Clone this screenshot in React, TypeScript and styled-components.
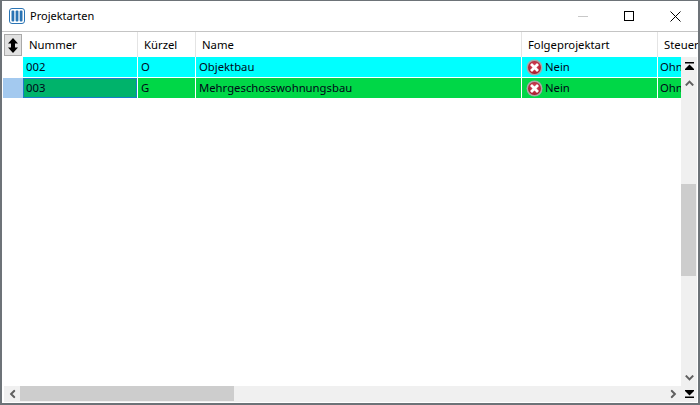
import React from "react";
import styled, { createGlobalStyle } from "styled-components";

const Global = createGlobalStyle`
  html, body { margin: 0; padding: 0; background: #fff; }
  body { font-family: "Noto Sans", "Open Sans", sans-serif; font-size: 11.3px; color: #000; }
`;

const Window = styled.div`
  width: 700px; height: 405px; box-sizing: border-box; overflow: hidden;
  display: flex; flex-direction: column; background: #fff;
  border-style: solid; border-color: #6d7378; border-width: 1px 2px 2px 2px;
`;
const TitleBar = styled.div`
  height: 30px; flex: none; display: flex; align-items: center; padding-left: 7px;
`;
const AppIcon = styled.svg`width: 16px; height: 16px; flex: none;`;
const Title = styled.div`margin-left: 5px; font-size: 11px; line-height: 16px; white-space: nowrap;`;
const Caption = styled.div`margin-left: auto; display: flex; height: 100%;`;
const CaptionButton = styled.div`
  width: 46px; height: 30px; display: flex; align-items: center; justify-content: center;
`;
const TableArea = styled.div`
  flex: 1; min-height: 0; display: flex; flex-direction: column; padding-left: 1px; overflow: hidden; border-top: 1px solid #c4c4c4;
`;
const cols = "20px 115px 58px 326px 136px 60px";
const HeaderRow = styled.div`
  flex: none; height: 25px; display: grid; grid-template-columns: ${cols}; overflow: hidden;
`;
const CornerCell = styled.div`padding: 2px 0 0 1px;`;
const Corner = styled.div`
  width: 18px; height: 22px; box-sizing: border-box; border: 1px solid #a9a9a9; background: #e1e1e1;
  display: flex; align-items: center; justify-content: center;
`;
const HeadCell = styled.div`
  box-sizing: border-box; border-right: 1px solid #e4e4e4; padding-left: 6px; padding-top: 1px; line-height: 24px; white-space: nowrap; overflow: hidden;
`;
const Middle = styled.div`flex: 1; min-height: 0; display: flex;`;
const Rows = styled.div`flex: 1; min-width: 0; overflow: hidden; display: flex; flex-direction: column; gap: 1px;`;
const Row = styled.div`height: 20px; display: grid; grid-template-columns: ${cols};`;
const Selector = styled.div<{ $active?: boolean }>`
  background: ${p => (p.$active ? "#a3c9ef" : "#fff")};
`;
const Cell = styled.div<{ $bg: string; $focus?: boolean }>`
  box-sizing: border-box; background: ${p => p.$bg}; border-right: 1px solid #fff; padding-left: 2px;
  line-height: 20px; white-space: nowrap; overflow: hidden; display: flex; align-items: center; color: #000818;
  ${p => p.$focus && "box-shadow: inset 0 0 0 1px #1680c8;"}
`;
const Indented = styled.span`margin-left: 1px;`;
const StatusIcon = styled.svg`width: 17px; height: 17px; flex: none; margin-right: 2px; margin-left: 2px;`;
const VScroll = styled.div`
  width: 16px; flex: none; background: #f0f0f0; display: flex; flex-direction: column; align-items: center;
  margin-right: 1px;
`;
const ScrollButton = styled.div`
  height: 17px; width: 100%; flex: none; display: flex; align-items: center; justify-content: center;
`;
const VTrack = styled.div`flex: 1; min-height: 0; width: 100%; display: flex; flex-direction: column;`;
const VThumb = styled.div`width: 15px; height: 92px; margin-top: 93px; background: #cdcdcd; align-self: flex-start;`;
const Bottom = styled.div`flex: none; height: 16px; display: flex; margin-bottom: 1px; padding-left: 1px; margin-right: 1px;`;
const HScroll = styled.div`flex: 1; background: #f0f0f0; display: flex; align-items: stretch;`;
const HButton = styled.div`width: 16px; flex: none; display: flex; align-items: center; justify-content: center;`;
const HTrack = styled.div`flex: 1; display: flex;`;
const HThumb = styled.div`width: 214px; height: 15px; background: #cdcdcd;`;
const BottomCorner = styled.div`width: 16px; flex: none; background: #f0f0f0; display: flex; align-items: center; justify-content: center;`;

const Chevron = ({ rot = 0 }: { rot?: number }) => (
  <svg width="9" height="6" viewBox="0 0 9 6" style={{ transform: `rotate(${rot}deg)` }}>
    <path d="M0.8 5.4 L4.5 1.6 L8.2 5.4" fill="none" stroke="#606060" strokeWidth="2" />
  </svg>
);
const EndArrow = ({ flip }: { flip?: boolean }) => (
  <svg width="9" height="8" viewBox="0 0 9 8" style={flip ? { transform: "scaleY(-1)" } : undefined}>
    <rect x="0" y="0" width="9" height="1.5" fill="#000" />
    <path d="M4.5 2.5 L9 7 L9 8 L0 8 L0 7 Z" fill="#000" />
  </svg>
);
const NoIcon = () => (
  <StatusIcon viewBox="0 0 17 17">
    <defs>
      <radialGradient id="noRed" cx="50%" cy="40%" r="60%">
        <stop offset="0%" stopColor="#de5068" />
        <stop offset="100%" stopColor="#a81628" />
      </radialGradient>
    </defs>
    <circle cx="8.5" cy="8.5" r="8" fill="#a8a8a8" />
    <circle cx="8.5" cy="8.5" r="6.5" fill="url(#noRed)" />
    <path d="M5 5 L12 12 M12 5 L5 12" stroke="#fff" strokeWidth="2.8" />
  </StatusIcon>
);

const data = [
  { bg: "#00ffff", num: "002", k: "O", name: "Objektbau" },
  { bg: "#00d747", num: "003", k: "G", name: "Mehrgeschosswohnungsbau", active: true },
];

export default function App() {
  return (
    <Window>
      <Global />
      <TitleBar>
        <AppIcon viewBox="0 0 16 16">
          <rect x="0.5" y="0.5" width="15" height="15" rx="2.5" fill="#fff" stroke="#2a74b4" />
          <rect x="2.5" y="2.5" width="2.8" height="11" rx="1" fill="#2a74b4" />
          <rect x="6.6" y="2.5" width="2.8" height="11" rx="1" fill="#2a74b4" />
          <rect x="10.7" y="2.5" width="2.8" height="11" rx="1" fill="#2a74b4" />
        </AppIcon>
        <Title>Projektarten</Title>
        <Caption>
          <CaptionButton>
            <svg width="10" height="10" viewBox="0 0 10 10"><path d="M0 5.5H10" stroke="#c8c8c8" /></svg>
          </CaptionButton>
          <CaptionButton>
            <svg width="10" height="10" viewBox="0 0 10 10"><rect x="0.5" y="0.5" width="9" height="9" fill="none" stroke="#000" /></svg>
          </CaptionButton>
          <CaptionButton>
            <svg width="11" height="11" viewBox="0 0 11 11"><path d="M0.5 0.5L10.5 10.5M10.5 0.5L0.5 10.5" stroke="#000" /></svg>
          </CaptionButton>
        </Caption>
      </TitleBar>
      <TableArea>
        <HeaderRow>
          <CornerCell>
            <Corner>
              <svg width="10" height="15" viewBox="0 0 10 15">
                <path d="M5 0 L10 5.5 H0 Z M0 9.5 H10 L5 15 Z" fill="#000" />
                <rect x="3" y="4" width="4" height="7" fill="#000" />
              </svg>
            </Corner>
          </CornerCell>
          <HeadCell>Nummer</HeadCell>
          <HeadCell>Kürzel</HeadCell>
          <HeadCell>Name</HeadCell>
          <HeadCell>Folgeprojektart</HeadCell>
          <HeadCell>Steuer</HeadCell>
        </HeaderRow>
        <Middle>
          <Rows>
            {data.map(r => (
              <Row key={r.num}>
                <Selector $active={r.active} />
                <Cell $bg={r.active ? "#00b36b" : r.bg} $focus={r.active}><Indented>{r.num}</Indented></Cell>
                <Cell $bg={r.bg}><Indented>{r.k}</Indented></Cell>
                <Cell $bg={r.bg}><Indented>{r.name}</Indented></Cell>
                <Cell $bg={r.bg}><NoIcon />Nein</Cell>
                <Cell $bg={r.bg}>Ohne</Cell>
              </Row>
            ))}
          </Rows>
          <VScroll>
            <ScrollButton><EndArrow /></ScrollButton>
            <ScrollButton><Chevron /></ScrollButton>
            <VTrack><VThumb /></VTrack>
            <ScrollButton><Chevron rot={180} /></ScrollButton>
          </VScroll>
        </Middle>
        <Bottom>
          <HScroll>
            <HButton><Chevron rot={-90} /></HButton>
            <HTrack><HThumb /></HTrack>
            <HButton><Chevron rot={90} /></HButton>
          </HScroll>
          <BottomCorner><EndArrow flip /></BottomCorner>
        </Bottom>
      </TableArea>
    </Window>
  );
}
